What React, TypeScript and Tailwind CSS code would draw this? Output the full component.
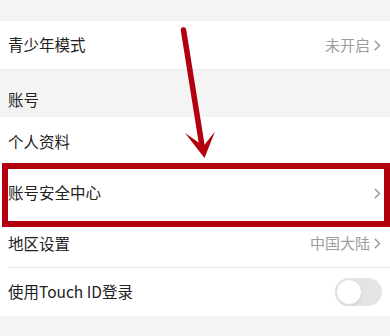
import React from "react";

const Chevron = () => (
  <svg width="7" height="11" viewBox="0 0 7 11" className="ml-[4px]">
    <path d="M1.2 1.2 L5.6 5.5 L1.2 9.8" fill="none" stroke="#9a9a9a" strokeWidth="1.5" strokeLinecap="round" strokeLinejoin="round" />
  </svg>
);

export default function App() {
  return (
    <div
      className="relative w-[390px] h-[336px] overflow-hidden bg-[#f4f4f4] text-[#222]"
      style={{ fontFamily: '"Noto Sans CJK SC", "Noto Sans", sans-serif' }}
    >
      <div className="h-[21px]" />
      <div className="h-[49px] bg-white flex items-center justify-between pl-[8px] pr-[9px] border-b border-[#ececec]">
        <span className="text-[15.5px]">青少年模式</span>
        <span className="flex items-center text-[15px] text-[#9d9d9d]">
          未开启
          <Chevron />
        </span>
      </div>
      <div className="h-[47px] flex items-end pl-[8px] pb-[3px]">
        <span className="text-[15.5px] leading-[30px]">账号</span>
      </div>
      <div className="bg-white">
        <div className="h-[49px] flex items-center pl-[8px]">
          <span className="text-[15.5px]">个人资料</span>
        </div>
        <div className="h-[54px] flex items-center justify-between pl-[8px] pr-[9px]">
          <span className="text-[15.5px]">账号安全中心</span>
          <Chevron />
        </div>
        <div className="h-[47px] flex items-center justify-between pl-[8px] pr-[9px]">
          <span className="text-[15.5px]">地区设置</span>
          <span className="flex items-center text-[15px] text-[#9d9d9d]">
            中国大陆
            <Chevron />
          </span>
        </div>
        <div className="ml-[8px] h-px bg-[#ececec]" />
        <div className="h-[48px] flex items-center justify-between pl-[8px] pr-[8px]">
          <span className="text-[15.5px]">使用Touch ID登录</span>
          <div className="relative w-[47px] h-[28px] rounded-full bg-[#e4e4e4]">
            <div className="absolute left-px top-px w-[26px] h-[26px] rounded-full bg-white border border-[#e0e0e0] shadow-[0_1px_2px_rgba(0,0,0,0.08)]" />
          </div>
        </div>
      </div>

      {/* red highlight box */}
      <div className="absolute left-[2px] top-[163px] w-[388px] h-[64px] border-[6px] border-[#b2000e] pointer-events-none" />

      {/* arrow */}
      <svg className="absolute left-0 top-0 pointer-events-none" width="390" height="336" viewBox="0 0 390 336">
        <line x1="183.5" y1="30" x2="202" y2="146" stroke="#b2000e" strokeWidth="5.5" strokeLinecap="round" />
        <polygon points="185,133 203.5,146 215,131.5 204.5,158" fill="#b2000e" />
      </svg>
    </div>
  );
}
